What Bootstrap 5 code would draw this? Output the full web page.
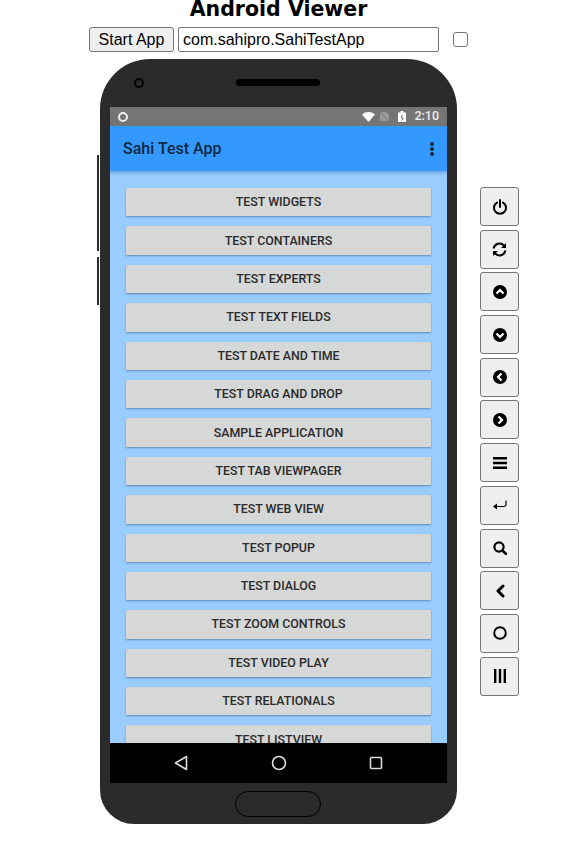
<!DOCTYPE html>
<html lang="en">
<head>
    <meta charset="UTF-8">
    <meta name="viewport" content="width=device-width, initial-scale=1.0">
    <title>Android Viewer</title>
    <link href="https://cdn.jsdelivr.net/npm/bootstrap@5.3.0/dist/css/bootstrap.min.css" rel="stylesheet">
    <style>
        body { background: #fff; color: #000; font-family: "Liberation Sans", Arial, sans-serif; }
        .page-title { font-family: "DejaVu Sans", Verdana, sans-serif; font-weight: 700; font-size: 20.5px; line-height: 19px; width: 557px; margin: 0; text-align: center; }
        .top-form { width: 557px; height: 25px; margin-top: 8px; }
        .start-btn { width: 85px; height: 25px; padding: 0; font-size: 16px; line-height: 23px; color: #000; background: #efefef; border: 1px solid #767676; border-radius: 3px; }
        .pkg-input { width: 261px; height: 25px; margin-left: 4px; padding: 1px 4px; font-size: 16px; color: #000; border: 1px solid #767676; border-radius: 2px; }
        .auto-check { width: 15px; height: 15px; margin: 0 0 0 14px; appearance: none; background: #fff; border: 1px solid #767676; border-radius: 3px; }
        .device-row { margin-top: 7px; }
        .side-rail { width: 3px; margin-left: 97px; padding-top: 96px; }
        .rail-up { width: 2px; height: 96px; background: #2b2b2b; }
        .rail-vol { width: 2px; height: 48px; margin-top: 6px; background: #2b2b2b; }
        .phone { width: 357px; height: 765px; padding: 48px 10px 41px; background: #2b2b2b; border-radius: 50px 50px 34px 34px; position: relative; }
        .cam-dot { position: absolute; left: 34px; top: 19px; width: 10px; height: 10px; border: 2px solid #000; border-radius: 50%; }
        .speaker { position: absolute; left: 136px; top: 20px; width: 84px; height: 7px; background: #000; border-radius: 4px; }
        .home-key { position: absolute; left: 135px; top: 732px; width: 86px; height: 26px; border: 1px solid #000; border-radius: 13px; }
        .screen { height: 676px; overflow: hidden; background: #99ccff; }
        .status-bar { height: 19px; padding: 0 8px; background: #757575; color: #eee; font-family: Roboto, sans-serif; font-weight: 500; font-size: 12.5px; }
        .status-ring { width: 10px; height: 10px; border: 2px solid #eee; border-radius: 50%; }
        .app-bar { height: 45px; padding: 0 13px; background: #3399ff; color: #10283f; font-family: Roboto, sans-serif; font-weight: 500; font-size: 16px; box-shadow: 0 2px 3px rgba(40, 110, 190, .45); position: relative; }
        .menu-dots { width: 4px; }
        .menu-dots i { display: block; width: 4px; height: 4px; margin: 1px 0; background: #10283f; border-radius: 50%; }
        .test-list { height: 572px; padding: 17px 16px 0; gap: 10px; overflow: hidden; }
        .test-btn { flex: 0 0 28.4px; width: 305px; padding: 0; font-family: Roboto, sans-serif; font-weight: 500; font-size: 12.4px; line-height: 28px; color: #2a2a2a; background: #d6d7d7; border: 0; border-radius: 1px; box-shadow: 0 1px 2px rgba(50, 80, 120, .55); }
        .nav-bar { height: 40px; padding: 0 64px; background: #000; }
        .key-col { width: 39px; margin-left: 23px; padding-top: 128px; }
        .key-btn { width: 39px; height: 39px; margin-bottom: 3.7px; padding: 0; color: #000; background: #efefef; border: 1px solid #767676; border-radius: 3px; }
        .key-btn svg { display: block; margin: auto; }
    </style>
</head>
<body>
<h1 class="page-title">Android Viewer</h1>
<div class="top-form d-flex align-items-center justify-content-start">
    <button class="start-btn ms-auto" type="button">Start App</button>
    <input class="pkg-input" type="text" value="com.sahipro.SahiTestApp">
    <input class="auto-check me-auto" type="checkbox">
</div>

<div class="device-row d-flex align-items-start">
    <div class="side-rail">
        <div class="rail-up"></div>
        <div class="rail-vol"></div>
    </div>
    <div class="phone">
        <div class="cam-dot"></div>
        <div class="speaker"></div>
        <div class="home-key"></div>
        <div class="screen d-flex flex-column">
            <div class="status-bar d-flex align-items-center">
                <div class="status-ring"></div>
                <svg class="ms-auto" width="13" height="10" viewBox="0 0 13 10"><path d="M0 2.5C3.5-.8 9.5-.8 13 2.5L6.5 10z" fill="#fff"/></svg>
                <svg class="ms-1" width="11" height="11" viewBox="0 0 11 11"><path d="M1 1h6l3 3v6H1z" fill="#9a9a9a"/><path d="M1 1l9 9" stroke="#757575"/></svg>
                <svg class="ms-2" width="8" height="11" viewBox="0 0 8 11"><path d="M2.5 0h3v1.5H8V11H0V1.5h2.5z" fill="#fff"/><path d="M4.5 4L3 7h2l-1 2.5" stroke="#757575" fill="none"/></svg>
                <span class="ms-2">2:10</span>
            </div>
            <div class="app-bar d-flex align-items-center justify-content-between">
                <span>Sahi Test App</span>
                <div class="menu-dots"><i></i><i></i><i></i></div>
            </div>
            <div class="test-list d-flex flex-column">
                <button class="test-btn" type="button">TEST WIDGETS</button>
                <button class="test-btn" type="button">TEST CONTAINERS</button>
                <button class="test-btn" type="button">TEST EXPERTS</button>
                <button class="test-btn" type="button">TEST TEXT FIELDS</button>
                <button class="test-btn" type="button">TEST DATE AND TIME</button>
                <button class="test-btn" type="button">TEST DRAG AND DROP</button>
                <button class="test-btn" type="button">SAMPLE APPLICATION</button>
                <button class="test-btn" type="button">TEST TAB VIEWPAGER</button>
                <button class="test-btn" type="button">TEST WEB VIEW</button>
                <button class="test-btn" type="button">TEST POPUP</button>
                <button class="test-btn" type="button">TEST DIALOG</button>
                <button class="test-btn" type="button">TEST ZOOM CONTROLS</button>
                <button class="test-btn" type="button">TEST VIDEO PLAY</button>
                <button class="test-btn" type="button">TEST RELATIONALS</button>
                <button class="test-btn" type="button">TEST LISTVIEW</button>
            </div>
            <div class="nav-bar d-flex align-items-center justify-content-between">
                <svg width="14" height="16" viewBox="0 0 14 16"><path d="M12.5 1.5v13L1.5 8z" fill="none" stroke="#ddd" stroke-width="1.6" stroke-linejoin="round"/></svg>
                <svg width="16" height="16" viewBox="0 0 16 16"><circle cx="8" cy="8" r="6.5" fill="none" stroke="#ddd" stroke-width="1.6"/></svg>
                <svg width="14" height="14" viewBox="0 0 14 14"><rect x="1.5" y="1.5" width="11" height="11" rx="1" fill="none" stroke="#ddd" stroke-width="1.6"/></svg>
            </div>
        </div>
    </div>
    <div class="key-col d-flex flex-column">
        <button class="key-btn" type="button"><svg width="14" height="16" viewBox="0 0 14 16"><path d="M4 3.6a6 6 0 1 0 6 0M7 1v7" fill="none" stroke="#000" stroke-width="2" stroke-linecap="round"/></svg></button>
        <button class="key-btn" type="button"><svg width="15" height="15" viewBox="0 0 15 15"><path d="M1.6 6.5A6 6 0 0 1 12 3.6M13.4 8.5A6 6 0 0 1 3 11.4" fill="none" stroke="#000" stroke-width="2"/><path d="M14 1v5H9zM1 14V9h5z"/></svg></button>
        <button class="key-btn" type="button"><svg width="14" height="14" viewBox="0 0 14 14"><circle cx="7" cy="7" r="7"/><path d="M3.5 8.5L7 5l3.5 3.5" fill="none" stroke="#fff" stroke-width="2.2"/></svg></button>
        <button class="key-btn" type="button"><svg width="14" height="14" viewBox="0 0 14 14"><circle cx="7" cy="7" r="7"/><path d="M3.5 5.5L7 9l3.5-3.5" fill="none" stroke="#fff" stroke-width="2.2"/></svg></button>
        <button class="key-btn" type="button"><svg width="14" height="14" viewBox="0 0 14 14"><circle cx="7" cy="7" r="7"/><path d="M8.5 3.5L5 7l3.5 3.5" fill="none" stroke="#fff" stroke-width="2.2"/></svg></button>
        <button class="key-btn" type="button"><svg width="14" height="14" viewBox="0 0 14 14"><circle cx="7" cy="7" r="7"/><path d="M5.5 3.5L9 7l-3.5 3.5" fill="none" stroke="#fff" stroke-width="2.2"/></svg></button>
        <button class="key-btn" type="button"><svg width="14" height="12" viewBox="0 0 14 12"><path d="M0 0h14v2.4H0zM0 4.8h14v2.4H0zM0 9.6h14V12H0z"/></svg></button>
        <button class="key-btn" type="button"><svg width="14" height="11" viewBox="0 0 14 11"><path d="M13 .5v4a2 2 0 0 1-2 2H2" fill="none" stroke="#000" stroke-width="1.2"/><path d="M0 6.5L4 3.6v5.8z"/></svg></button>
        <button class="key-btn" type="button"><svg width="14" height="14" viewBox="0 0 14 14"><circle cx="6" cy="6" r="4.6" fill="none" stroke="#000" stroke-width="2.2"/><path d="M9.3 9.3L13 13" stroke="#000" stroke-width="2.6" stroke-linecap="round"/></svg></button>
        <button class="key-btn" type="button"><svg width="10" height="14" viewBox="0 0 10 14"><path d="M8 2L3 7l5 5" fill="none" stroke="#000" stroke-width="3" stroke-linecap="round" stroke-linejoin="round"/></svg></button>
        <button class="key-btn" type="button"><svg width="14" height="14" viewBox="0 0 14 14"><circle cx="7" cy="7" r="5.8" fill="none" stroke="#000" stroke-width="2"/></svg></button>
        <button class="key-btn" type="button"><svg width="12" height="14" viewBox="0 0 12 14"><path d="M0 0h2.4v14H0zM4.8 0h2.4v14H4.8zM9.6 0H12v14H9.6z"/></svg></button>
    </div>
</div>
<script src="https://cdn.jsdelivr.net/npm/bootstrap@5.3.0/dist/js/bootstrap.bundle.min.js"></script>
</body>
</html>
